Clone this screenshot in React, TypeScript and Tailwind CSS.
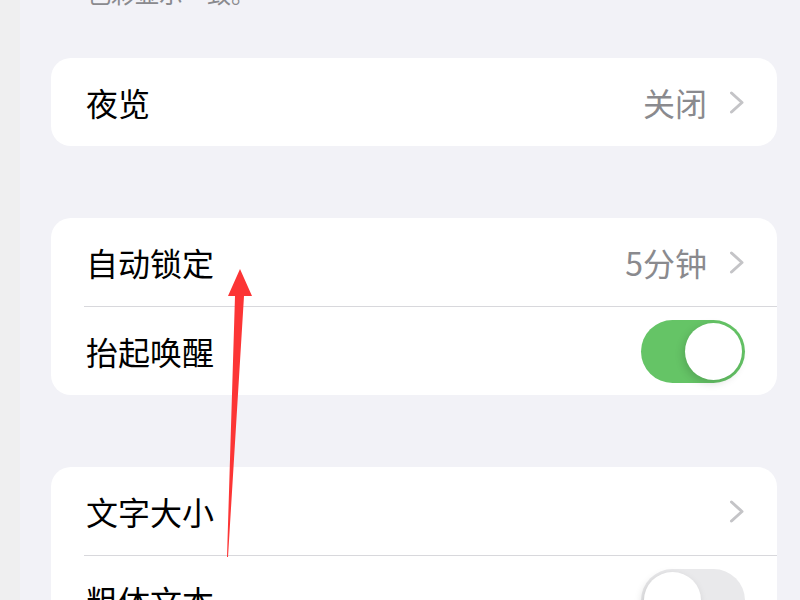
import React from 'react';

const font = { fontFamily: '"Noto Sans CJK SC", "Noto Sans", sans-serif' };

function Chevron() {
  return (
    <svg width="16" height="24" viewBox="0 0 16 24" className="shrink-0">
      <polyline points="2.5,3 13,12.5 2.5,22" fill="none" stroke="#c4c4c7" strokeWidth="3" strokeLinecap="round" strokeLinejoin="round" />
    </svg>
  );
}

function Toggle({ on }: { on: boolean }) {
  return (
    <div
      className={`w-[104px] h-[63px] rounded-full p-[3px] flex shrink-0 ${
        on ? 'bg-[#65c466] justify-end' : 'bg-[#e9e9eb] justify-start'
      }`}
    >
      <div className="w-[57px] h-[57px] rounded-full bg-white shadow-[-2px_3px_8px_rgba(0,0,0,0.15)]" />
    </div>
  );
}

function Row({
  label,
  value,
  chevron,
  toggle,
  divider,
}: {
  label: string;
  value?: string;
  chevron?: boolean;
  toggle?: 'on' | 'off';
  divider?: boolean;
}) {
  return (
    <div>
      <div className="h-[88px] pl-[35px] pr-[32px] flex items-center justify-between">
        <span className="text-[32px] text-black leading-none">{label}</span>
        <div className="flex items-center gap-[22px]">
          {value && <span className="text-[32px] text-[#8a8a8e] leading-none">{value}</span>}
          {chevron && <Chevron />}
          {toggle && <Toggle on={toggle === 'on'} />}
        </div>
      </div>
      {divider && <div className="ml-[33px] h-px bg-[#d8d8dc]" />}
    </div>
  );
}

export default function App() {
  return (
    <div className="relative w-[800px] h-[600px] overflow-hidden bg-[#f2f2f7] flex" style={font}>
      <div className="w-[20px] shrink-0 bg-[#efeff0]" />
      <div className="flex-1 pl-[31px] pr-[23px] flex flex-col">
        {/* footer text from the previous group, cut off */}
        <div className="h-[58px] shrink-0 flex flex-col justify-start">
          <p className="-mt-[25px] pl-[36px] text-[24px] leading-[36px] text-[#8a8a8e]">色彩显示一致。</p>
        </div>

        <div className="bg-white rounded-[20px] overflow-hidden shrink-0">
          <Row label="夜览" value="关闭" chevron />
        </div>

        <div className="h-[72px] shrink-0" />

        <div className="bg-white rounded-[20px] overflow-hidden shrink-0">
          <Row label="自动锁定" value="5分钟" chevron divider />
          <Row label="抬起唤醒" toggle="on" />
        </div>

        <div className="h-[72px] shrink-0" />

        <div className="bg-white rounded-[20px] overflow-hidden shrink-0">
          <Row label="文字大小" chevron divider />
          <Row label="粗体文本" toggle="off" />
        </div>
      </div>

      {/* red annotation arrow */}
      <svg className="absolute inset-0 pointer-events-none" width="800" height="600" viewBox="0 0 800 600">
        <polygon points="240,269 228,296 235,296 227,557 228,557 244,296 252,296" fill="#fc3535" />
      </svg>
    </div>
  );
}
